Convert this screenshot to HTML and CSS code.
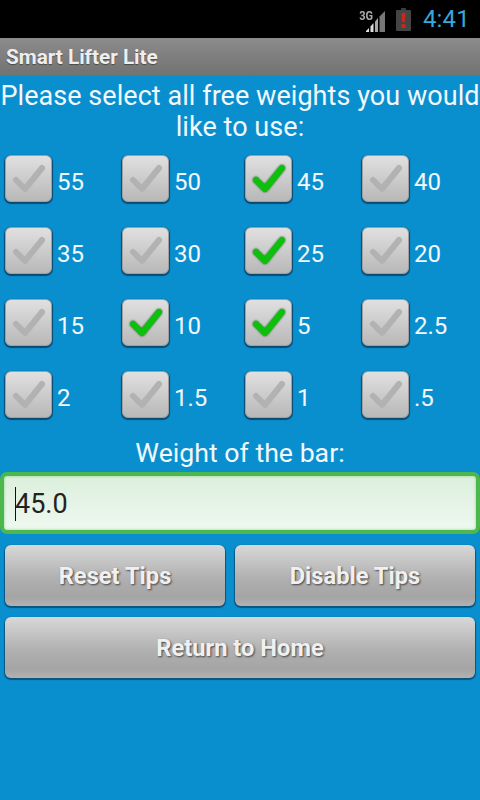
FILE: index.html
```html
<!DOCTYPE html>
<html lang="en">
  <head>
    <meta charset="UTF-8">
    <title>Smart Lifter Lite</title>
    <link rel="stylesheet" href="styles.css">
  </head>

  <body>
    <div class="status-bar">
      <div class="signal">
        <span class="signal-type">3G</span>
        <svg class="signal-bars" width="22" height="22" viewBox="0 0 22 22">
          <path d="M1 22h3v-4l-3 3z" fill="#ddd"/>
          <path d="M5.500 22h3v-9l-3 3.500z" fill="#ddd"/>
          <path d="M10 22h3v-14l-3 3.500z" fill="#aaa"/>
          <path d="M14.500 22h5.500v-21l-5.500 5.500z" fill="#777"/>
        </svg>
      </div>
      <svg class="battery" width="15" height="23" viewBox="0 0 15 23">
        <path d="M5 0h5v2h-5z" fill="#3a3a3a"/>
        <rect x="0" y="2" width="15" height="21" rx="1" fill="#444"/>
        <path d="M5.500 5h4l-.5 9h-3z" fill="#c8281c"/>
        <rect x="5.500" y="16" width="4" height="4" fill="#c8281c"/>
      </svg>
      <span class="clock">4:41</span>
    </div>

    <div class="title-bar">Smart Lifter Lite</div>

    <h1 class="prompt">Please select all free weights you would like to use:</h1>

    <svg class="defs" width="0" height="0">
      <symbol id="tick" viewBox="0 0 36 32">
        <path d="M5 17l9 9L31 5" fill="none" stroke-width="6" stroke-linecap="round" stroke-linejoin="round"/>
      </symbol>
    </svg>

    <div class="weights">
      <label class="weight"><span class="box"><svg class="tick"><use href="#tick"/></svg></span>55</label>
      <label class="weight"><span class="box"><svg class="tick"><use href="#tick"/></svg></span>50</label>
      <label class="weight on"><span class="box"><svg class="tick"><use href="#tick"/></svg></span>45</label>
      <label class="weight"><span class="box"><svg class="tick"><use href="#tick"/></svg></span>40</label>

      <label class="weight"><span class="box"><svg class="tick"><use href="#tick"/></svg></span>35</label>
      <label class="weight"><span class="box"><svg class="tick"><use href="#tick"/></svg></span>30</label>
      <label class="weight on"><span class="box"><svg class="tick"><use href="#tick"/></svg></span>25</label>
      <label class="weight"><span class="box"><svg class="tick"><use href="#tick"/></svg></span>20</label>

      <label class="weight"><span class="box"><svg class="tick"><use href="#tick"/></svg></span>15</label>
      <label class="weight on"><span class="box"><svg class="tick"><use href="#tick"/></svg></span>10</label>
      <label class="weight on"><span class="box"><svg class="tick"><use href="#tick"/></svg></span>5</label>
      <label class="weight"><span class="box"><svg class="tick"><use href="#tick"/></svg></span>2.5</label>

      <label class="weight"><span class="box"><svg class="tick"><use href="#tick"/></svg></span>2</label>
      <label class="weight"><span class="box"><svg class="tick"><use href="#tick"/></svg></span>1.5</label>
      <label class="weight"><span class="box"><svg class="tick"><use href="#tick"/></svg></span>1</label>
      <label class="weight"><span class="box"><svg class="tick"><use href="#tick"/></svg></span>.5</label>
    </div>

    <div class="bar-label">Weight of the bar:</div>
    <div class="bar-input"><span class="caret"></span>45.0</div>

    <div class="buttons">
      <div class="btn">Reset Tips</div>
      <div class="btn">Disable Tips</div>
      <div class="btn wide">Return to Home</div>
    </div>
  </body>
</html>
```

FILE: styles.css
```css
html,
body {
  height: 100%;
}

body {
  margin: 0;
  background-color: #0a8fce;
  color: #f2f8fc;
  font-family: Roboto, sans-serif;
  overflow: hidden;
}

.defs {
  display: block;
  height: 0;
}

/* Status bar */
.status-bar {
  height: 38px;
  background-color: #000;
  display: flex;
  align-items: center;
  justify-content: flex-end;
  padding-right: 10px;
  box-sizing: border-box;
}

.signal {
  display: flex;
  align-items: flex-end;
  height: 24px;
  margin-top: 2px;
}

.signal-type {
  font-size: 13px;
  font-weight: 700;
  line-height: 12px;
  color: #aaa;
  margin: 0 -9px 10px 0;
  position: relative;
  z-index: 1;
  transform: scaleX(0.85);
}

.signal-bars {
  margin-top: 8px;
}

.battery {
  margin: 0 0 0 9px;
}

.clock {
  margin-left: 12px;
  font-size: 24px;
  color: #35a8dc;
  letter-spacing: 0.2px;
}

/* Title bar */
.title-bar {
  height: 38px;
  line-height: 39px;
  padding-left: 6px;
  font-size: 20.700px;
  font-weight: 700;
  color: #eee;
  background: linear-gradient(#8c8c8c, #7e7e7e 50%, #727272);
  text-shadow: 0 1px 1px rgba(0, 0, 0, 0.4);
}

.prompt {
  margin: 5px 0 0;
  font-size: 27px;
  font-weight: 400;
  line-height: 31px;
  text-align: center;
  letter-spacing: 0.05px;
}

/* Weight checkboxes */
.weights {
  display: grid;
  grid-template-columns: 117px 123px 117px 1fr;
  grid-auto-rows: 72px;
  margin: 12px 0 0 5px;
}

.weight {
  display: flex;
  align-items: flex-start;
  font-size: 24px;
  line-height: 54px;
}

.box {
  width: 47px;
  height: 47px;
  margin-right: 5px;
  box-sizing: border-box;
  border-radius: 6px;
  border: 1px solid #a0a0a0;
  background: linear-gradient(#e0e0e0, #b8b8b8);
  box-shadow: 0 1px 1px 1px #0a4a70;
  display: flex;
  align-items: center;
  justify-content: center;
}

.tick {
  width: 36px;
  height: 32px;
  stroke: #b2b2b2;
}

.weight.on .tick {
  stroke: #0cc00c;
  filter: drop-shadow(0 0 1px #0a5a0a);
}

/* Bar weight */
.bar-label {
  margin-top: -7px;
  font-size: 26.700px;
  line-height: 34px;
  text-align: center;
}

.bar-input {
  margin-top: 2px;
  height: 62px;
  box-sizing: border-box;
  border: 4px solid #4cb84c;
  border-radius: 7px;
  background: linear-gradient(#dcefdc, #eef8f0);
  box-shadow: inset 0 0 3px #8fd08f;
  color: #222;
  font-size: 27px;
  padding: 1px 0 0 11px;
  display: flex;
  align-items: center;
}

.caret {
  width: 1px;
  height: 34px;
  background-color: #111;
  margin-right: -1px;
}

/* Buttons */
.buttons {
  display: grid;
  grid-template-columns: 220px 240px;
  gap: 11px 10px;
  margin: 11px 5px 0;
}

.btn {
  height: 61px;
  line-height: 62px;
  text-align: center;
  border-radius: 6px;
  font-size: 23.700px;
  font-weight: 700;
  color: #f0f0f0;
  background: linear-gradient(#d8d8d8, #b0b0b0 55%, #a4a4a4 85%, #b2b2b2);
  box-shadow: 0 1px 1px 1px #0a5580;
  text-shadow: 1px 1px 2px #444;
}

.btn.wide {
  grid-column: 1 / 3;
}
```
